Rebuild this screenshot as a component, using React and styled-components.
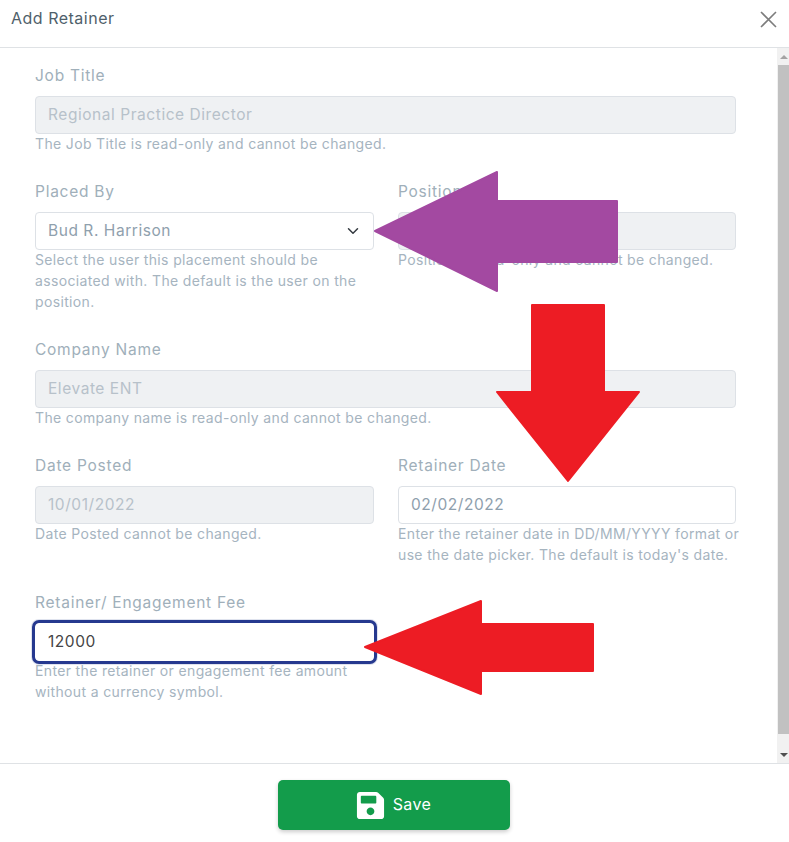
import React from 'react';
import styled, { createGlobalStyle } from 'styled-components';
import { FaSave } from 'react-icons/fa';

const Global = createGlobalStyle`
    html, body {
        margin: 0;
        padding: 0;
        background: #fff;
    }
    * {
        box-sizing: border-box;
    }
`;

const Modal = styled.div`
    position: relative;
    width: 789px;
    height: 842px;
    display: flex;
    flex-direction: column;
    overflow: hidden;
    background: #fff;
    font-family: Inter, "Open Sans", sans-serif;
`;

const Header = styled.div`
    height: 48px;
    flex: none;
    display: flex;
    align-items: flex-start;
    justify-content: space-between;
    padding: 8px 12px 0 11px;
    border-bottom: 1px solid #dfe2e5;
`;

const Title = styled.div`
    font-size: 16px;
    line-height: 20px;
    letter-spacing: 0.5px;
    color: #4f5f6b;
`;

const Close = styled.svg`
    width: 17px;
    height: 17px;
    margin-top: 3px;
    stroke: #7d7d7d;
    stroke-width: 1.6;
    fill: none;
`;

const Middle = styled.div`
    flex: 1;
    min-height: 0;
    display: flex;
`;

const Body = styled.div`
    flex: 1;
    padding: 15px 41px 0 35px;
`;

const Row = styled.div`
    display: grid;
    grid-template-columns: 339px 338px;
    gap: 24px;
    margin-bottom: 24px;
`;

const FullRow = styled.div`
    margin-bottom: 24px;
`;

const Label = styled.label`
    display: block;
    height: 24px;
    line-height: 26px;
    margin-bottom: 9px;
    font-size: 15.5px;
    letter-spacing: 0.75px;
    color: #a0afba;
`;

const Input = styled.div`
    height: 38px;
    display: flex;
    align-items: center;
    justify-content: space-between;
    padding: 0 12px 2px;
    font-size: 15.5px;
    letter-spacing: 0.55px;
    border: 1px solid #dde1e6;
    border-radius: 4px;
    background: ${p => (p.$disabled ? '#eff1f3' : '#fff')};
    color: ${p => (p.$disabled ? '#b7c1ca' : p.$muted ? '#8fa0ad' : '#4d5a64')};
    ${p => p.$focused && `
        border-color: #fff;
        color: #444;
        box-shadow: 0 0 0 3px #26398f, 0 0 0 4px #dfe3ee;
    `}
`;

const Help = styled.div`
    margin: -1px -8px 0 0;
    padding-bottom: 1px;
    font-size: 14px;
    line-height: 21px;
    letter-spacing: 0.35px;
    color: #a6b4bf;
`;

const Chevron = styled.svg`
    width: 12px;
    height: 12px;
    margin: 2px 2px 0 0;
    fill: none;
    stroke: #343a40;
    stroke-width: 2;
    stroke-linecap: round;
    stroke-linejoin: round;
`;

const Scrollbar = styled.div`
    width: 12px;
    flex: none;
    display: flex;
    flex-direction: column;
    background: #f1f1f1;
    padding-left: 1px;
`;

const ScrollArrow = styled.div`
    height: 17px;
    flex: none;
    display: flex;
    align-items: center;
    justify-content: center;
    ${p => !p.$up && 'margin-top: auto;'}
    &::before {
        content: '';
        border-left: 4px solid transparent;
        border-right: 4px solid transparent;
        ${p => (p.$up ? 'border-bottom: 4px solid #a3a3a3;' : 'border-top: 4px solid #505050;')}
    }
`;

const ScrollThumb = styled.div`
    height: 669px;
    flex: none;
    background: #c1c1c1;
`;

const Footer = styled.div`
    height: 79px;
    flex: none;
    display: flex;
    justify-content: center;
    padding: 16px 1px 0 0;
    border-top: 1px solid #dfe2e5;
`;

const SaveButton = styled.button`
    width: 232px;
    height: 50px;
    display: flex;
    align-items: center;
    justify-content: center;
    gap: 7px;
    padding: 0 2px 0 0;
    border: 0;
    border-radius: 5px;
    background: #139c4b;
    color: #fff;
    font-family: inherit;
    font-size: 16px;
    letter-spacing: 0.4px;
    box-shadow: 0 2px 4px rgba(0, 0, 0, 0.2);
    svg {
        width: 31px;
        height: 31px;
    }
`;

const SaveText = styled.span`
    padding-bottom: 3px;
`;

const Arrows = styled.svg`
    position: absolute;
    top: 0;
    left: 0;
    pointer-events: none;
    polygon {
        stroke-width: 2;
        stroke-linejoin: round;
    }
`;

const Field = ({ label, help, children }) => (
    <div>
        <Label>{label}</Label>
        {children}
        <Help>{help}</Help>
    </div>
);

const App = () => (
    <Modal>
        <Global />
        <Header>
            <Title>Add Retainer</Title>
            <Close viewBox="0 0 17 17">
                <path d="M1 1 L16 16 M16 1 L1 16" />
            </Close>
        </Header>
        <Middle>
            <Body>
                <FullRow>
                    <Field label="Job Title" help="The Job Title is read-only and cannot be changed.">
                        <Input $disabled>Regional Practice Director</Input>
                    </Field>
                </FullRow>
                <Row>
                    <Field label="Placed By" help="Select the user this placement should be associated with. The default is the user on the position.">
                        <Input $muted>
                            Bud R. Harrison
                            <Chevron viewBox="0 0 16 16">
                                <path d="M2 5 L8 11 L14 5" />
                            </Chevron>
                        </Input>
                    </Field>
                    <Field label="Position" help="Position is read-only and cannot be changed.">
                        <Input $disabled />
                    </Field>
                </Row>
                <FullRow>
                    <Field label="Company Name" help="The company name is read-only and cannot be changed.">
                        <Input $disabled>Elevate ENT</Input>
                    </Field>
                </FullRow>
                <Row>
                    <Field label="Date Posted" help="Date Posted cannot be changed.">
                        <Input $disabled>10/01/2022</Input>
                    </Field>
                    <Field label="Retainer Date" help="Enter the retainer date in DD/MM/YYYY format or use the date picker. The default is today's date.">
                        <Input $muted>02/02/2022</Input>
                    </Field>
                </Row>
                <Row>
                    <Field label="Retainer/ Engagement Fee" help="Enter the retainer or engagement fee amount without a currency symbol.">
                        <Input $focused>12000</Input>
                    </Field>
                </Row>
            </Body>
            <Scrollbar>
                <ScrollArrow $up />
                <ScrollThumb />
                <ScrollArrow />
            </Scrollbar>
        </Middle>
        <Footer>
            <SaveButton>
                <FaSave />
                <SaveText>Save</SaveText>
            </SaveButton>
        </Footer>
        <Arrows width="789" height="842" viewBox="0 0 789 842">
            <polygon fill="#a349a1" stroke="#a349a1" points="375,231 497,172 497,201 617,201 617,262 497,262 497,291" />
            <polygon fill="#ed1c24" stroke="#ed1c24" points="532,305 604,305 604,392 639,392 568,481 497,392 532,392" />
            <polygon fill="#ed1c24" stroke="#ed1c24" points="365,647 481,601 481,624 593,624 593,671 481,671 481,694" />
        </Arrows>
    </Modal>
);

export default App;
